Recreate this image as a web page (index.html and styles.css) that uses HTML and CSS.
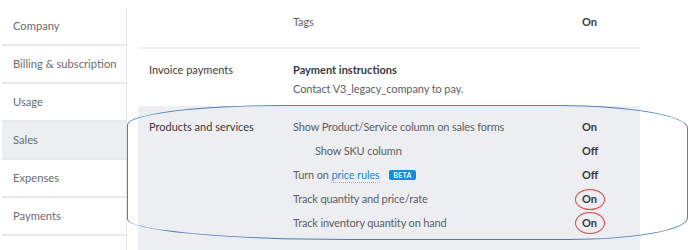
FILE: index.html
```html
<!DOCTYPE html>
<html>
<head>
<meta charset="utf-8">
<link rel="stylesheet" href="styles.css">
</head>
<body>
<div class="page">
  <nav class="sidebar">
    <div class="nav-item">Company</div>
    <div class="nav-item">Billing &amp; subscription</div>
    <div class="nav-item">Usage</div>
    <div class="nav-item active">Sales</div>
    <div class="nav-item">Expenses</div>
    <div class="nav-item">Payments</div>
    <div class="nav-item"></div>
  </nav>
  <main class="main">
    <section class="section tags">
      <div class="label"></div>
      <div class="rows">
        <div class="row"><span class="name">Tags</span><span class="value">On</span></div>
      </div>
    </section>
    <section class="section invoice">
      <div class="label">Invoice payments</div>
      <div class="rows">
        <div class="title">Payment instructions</div>
        <div class="desc">Contact V3_legacy_company to pay.</div>
      </div>
    </section>
    <section class="section products">
      <div class="label">Products and services</div>
      <div class="rows">
        <div class="row"><span class="name">Show Product/Service column on sales forms</span><span class="value">On</span></div>
        <div class="row"><span class="name sub">Show SKU column</span><span class="value">Off</span></div>
        <div class="row"><span class="name">Turn on <span class="link">price rules</span> <span class="beta">BETA</span></span><span class="value">Off</span></div>
        <div class="row"><span class="name">Track quantity and price/rate</span><span class="value"><span class="circled">On</span></span></div>
        <div class="row"><span class="name">Track inventory quantity on hand</span><span class="value"><span class="circled second">On</span></span></div>
      </div>
    </section>
  </main>
  <div class="highlight"></div>
</div>
</body>
</html>
```
FILE: styles.css
```css
* { box-sizing: border-box; }
html, body { margin: 0; padding: 0; background: #fff; }
body {
  font-family: "Lato", "Open Sans", sans-serif;
  font-size: 11px;
  color: #393a3d;
  width: 692px;
  height: 250px;
  overflow: hidden;
}
.page {
  position: relative;
  display: flex;
  align-items: flex-start;
  height: 250px;
  overflow: hidden;
}
.sidebar {
  width: 125px;
  margin-left: 2px;
  margin-top: 8px;
  border-right: 1px solid #e4e5e8;
  display: flex;
  flex-direction: column;
  font-size: 11.2px;
}
.nav-item {
  height: 38px;
  line-height: 36px;
  padding-left: 11px;
  color: #6b6c72;
  border-bottom: 2px solid #e8e9ec;
  flex-shrink: 0;
}
.nav-item.active { background: #eceef1; }
.main {
  margin-left: 11px;
  width: 502px;
  display: flex;
  flex-direction: column;
}
.section {
  display: flex;
}
.section .label {
  width: 155px;
  padding-left: 11px;
  color: #393a3d;
  flex-shrink: 0;
}
.section .rows { flex: 1; display: flex; flex-direction: column; }
.row {
  display: flex;
  height: 24px;
  line-height: 24px;
}
.row .name { width: 289px; color: #5d5e63; letter-spacing: -0.15px; }
.row .name.sub { padding-left: 22px; }
.row .value { font-weight: 700; color: #393a3d; position: relative; }
.tags { height: 49px; padding-top: 10px; border-bottom: 2px solid #eeeff1; }
.invoice { height: 57px; padding-top: 11px; line-height: 19px; }
.invoice .title { font-weight: 700; }
.invoice .desc { color: #5d5e63; letter-spacing: -0.1px; }
.invoice .label { line-height: 19px; }
.products {
  background: #eceef1;
  height: 144px;
  padding-top: 9px;
}
.products .label { line-height: 24px; }
.link {
  color: #2a87c9;
  border-bottom: 1px dotted #7fb3da;
  line-height: 14px;
  display: inline-block;
}
.beta {
  display: inline-block;
  background: #0d8fe0;
  color: #fff;
  font-size: 7px;
  font-weight: 700;
  line-height: 10px;
  height: 10px;
  padding: 0 4px;
  border-radius: 2px;
  margin-left: 7px;
  vertical-align: 1px;
  letter-spacing: 0.3px;
}
.circled::after {
  content: "";
  position: absolute;
  left: -7px;
  top: 2px;
  width: 28px;
  height: 19px;
  border: 1.5px solid #d9484a;
  border-radius: 50%;
}
.circled.second::after { top: 1px; height: 20px; }
.highlight {
  position: absolute;
  left: 127px;
  top: 105px;
  width: 561px;
  height: 135px;
  border: 1.5px solid #4f7fb8;
  border-radius: 156px 130px 120px 220px / 20px 23px 22px 21px;
  pointer-events: none;
}
```
